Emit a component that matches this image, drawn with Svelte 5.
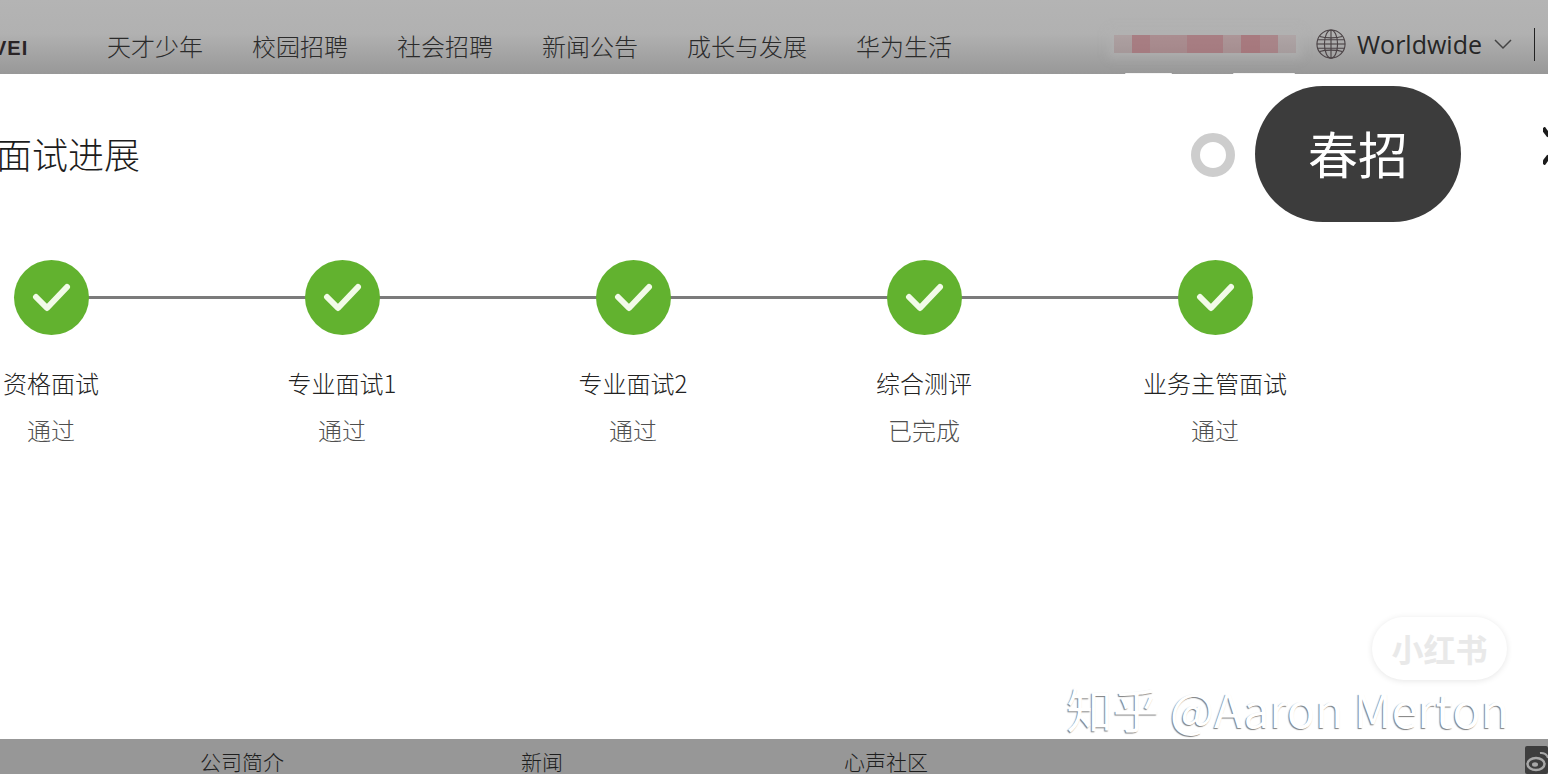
<script>
	const navItems = ['天才少年', '校园招聘', '社会招聘', '新闻公告', '成长与发展', '华为生活'];

	const steps = [
		{ name: '资格面试', status: '通过' },
		{ name: '专业面试1', status: '通过' },
		{ name: '专业面试2', status: '通过' },
		{ name: '综合测评', status: '已完成' },
		{ name: '业务主管面试', status: '通过' }
	];

	const footerLinks = ['公司简介', '新闻', '心声社区'];

	// mosaic over the user name in the header
	const mosaic = [0.2, 0.65, 0.45, 0.45, 0.65, 0.65, 0.35, 0.7, 0.55, 0.15];
</script>

<div class="page">
	<header class="topbar">
		<span class="logo">VEI</span>
		<nav class="nav">
			{#each navItems as item}
				<span>{item}</span>
			{/each}
		</nav>
		<div class="top-right">
			<div class="mosaic">
				{#each mosaic as a}
					<i style="opacity: {a}"></i>
				{/each}
			</div>
			<svg class="globe" width="30" height="30" viewBox="0 0 32 32" fill="none" stroke="#4a4245" stroke-width="1.2">
				<circle cx="16" cy="16" r="15" />
				<ellipse cx="16" cy="16" rx="7" ry="15" />
				<line x1="16" y1="1" x2="16" y2="31" />
				<line x1="1" y1="16" x2="31" y2="16" />
				<path d="M4 8c6 2 18 2 24 0M4 24c6-2 18-2 24 0M2 11.500h28M2 20.500h28" />
			</svg>
			<span class="region">Worldwide</span>
			<svg class="chevron" width="20" height="12" viewBox="0 0 20 12" fill="none" stroke="#444" stroke-width="1.5">
				<polyline points="2 2 10 10 18 2" />
			</svg>
			<span class="divider"></span>
		</div>
		<span class="scrap scrap-a"></span>
		<span class="scrap scrap-b"></span>
	</header>

	<main class="content">
		<div class="title-row">
			<h1>面试进展</h1>
			<div class="season">
				<span class="ring"></span>
				<span class="pill">春招</span>
			</div>
			<svg class="close" width="5" height="38" viewBox="0 0 5 38" fill="none" stroke="#1c1c1c" stroke-width="4.5">
				<line x1="0" y1="1" x2="6" y2="9" />
				<line x1="6" y1="29" x2="0" y2="37" />
			</svg>
		</div>

		<div class="steps">
			{#each steps as step, i}
				<div class="step">
					{#if i < steps.length - 1}
						<span class="line"></span>
					{/if}
					<span class="dot">
						<svg width="40" height="32" viewBox="0 0 40 32" fill="none" stroke="#f2fbe8" stroke-width="6" stroke-linecap="round" stroke-linejoin="round">
							<polyline points="5 15 16 26 36 5" />
						</svg>
					</span>
					<div class="step-name">{step.name}</div>
					<div class="step-status">{step.status}</div>
				</div>
			{/each}
		</div>

		<div class="wm-badge">小红书</div>
		<div class="wm-zhihu">知乎 @Aaron Merton</div>
	</main>

	<footer class="bottombar">
		{#each footerLinks as link}
			<span class="foot-link">{link}</span>
		{/each}
		<svg class="weibo" width="23" height="28" viewBox="0 0 23 28">
			<rect width="23" height="28" rx="2" fill="#3e3e3e" />
			<ellipse cx="11" cy="18" rx="8.500" ry="6" fill="none" stroke="#a8a8a8" stroke-width="2.500" />
			<ellipse cx="10" cy="18.500" rx="3" ry="2.200" fill="#a8a8a8" />
			<path d="M15 7a7 7 0 0 1 8 5" fill="none" stroke="#a8a8a8" stroke-width="2" />
		</svg>
	</footer>
</div>

<style>
	:global(body) {
		margin: 0;
		background: #fff;
	}

	.page {
		width: 1548px;
		height: 774px;
		display: flex;
		flex-direction: column;
		overflow: hidden;
		font-family: 'Noto Sans CJK SC', 'Liberation Sans', sans-serif;
		color: #222;
	}

	.topbar {
		height: 74px;
		flex: none;
		position: relative;
		display: flex;
		align-items: flex-start;
		background: linear-gradient(180deg, #b4b4b4 0%, #b1b1b1 45%, #989898 100%);
	}

	.logo {
		flex: none;
		width: 114px;
		margin-top: 36px;
		margin-left: -7px;
		font: bold 20px/24px 'Liberation Sans', sans-serif;
		letter-spacing: 1px;
		color: #2a2426;
		white-space: nowrap;
	}

	.nav {
		display: flex;
		gap: 49px;
		margin-top: 28px;
		font-size: 24px;
		line-height: 35px;
		font-weight: 300;
		color: #2b2b2b;
	}

	.top-right {
		margin-left: auto;
		display: flex;
		align-items: center;
		height: 32px;
		margin-top: 28px;
	}

	.mosaic {
		display: flex;
		width: 182px;
		height: 18px;
		margin-right: 20px;
		box-shadow: 0 0 8px 5px rgba(178, 178, 178, 0.6);
	}

	.mosaic i {
		flex: 1;
		background: #a5646b;
	}

	.globe {
		margin-right: 11px;
	}

	.region {
		font: 25px/32px 'Open Sans', sans-serif;
		color: #262626;
		margin-right: 11px;
	}

	.chevron {
		margin-right: 21px;
	}

	.divider {
		width: 1px;
		height: 33px;
		background: #222;
		margin-right: 13px;
	}

	.scrap {
		position: absolute;
		bottom: 0;
		height: 1px;
		background: #f4f4f4;
		border-radius: 1px 1px 0 0;
	}

	.scrap-a {
		left: 1125px;
		width: 47px;
	}

	.scrap-b {
		left: 1233px;
		width: 62px;
	}

	.content {
		flex: 1;
		position: relative;
		background: #fff;
	}

	.title-row {
		height: 136px;
		margin-top: 12px;
		display: flex;
		align-items: center;
	}

	h1 {
		margin: -3px 0 0 -4px;
		font-size: 36px;
		font-weight: 300;
		line-height: 50px;
		color: #1c1c1c;
	}

	.season {
		margin-left: auto;
		display: flex;
		align-items: center;
		gap: 20px;
	}

	.ring {
		width: 44px;
		height: 44px;
		margin-top: 2px;
		box-sizing: border-box;
		border: 9px solid #cdcdcd;
		border-radius: 50%;
	}

	.pill {
		width: 206px;
		height: 136px;
		border-radius: 68px;
		background: #3c3c3c;
		color: #fff;
		font-size: 50px;
		line-height: 132px;
		text-align: center;
	}

	.close {
		margin-left: 82px;
		margin-top: -16px;
		flex: none;
	}

	.steps {
		display: flex;
		margin-left: -94.5px;
		margin-top: 38px;
	}

	.step {
		width: 291px;
		flex: none;
		position: relative;
		display: flex;
		flex-direction: column;
		align-items: center;
	}

	.line {
		position: absolute;
		left: 50%;
		top: 35.5px;
		width: 291px;
		height: 3px;
		background: #7b7b7b;
	}

	.dot {
		position: relative;
		width: 75px;
		height: 75px;
		border-radius: 50%;
		background: #62b22f;
		display: flex;
		align-items: center;
		justify-content: center;
	}

	.step-name {
		margin-top: 30px;
		font-size: 24px;
		line-height: 35px;
		font-weight: 300;
		color: #222;
	}

	.step-status {
		margin-top: 12px;
		font-size: 24px;
		line-height: 35px;
		font-weight: 300;
		color: #4f4f4f;
	}

	.wm-badge {
		position: absolute;
		left: 1372px;
		top: 543px;
		width: 135px;
		height: 63px;
		border-radius: 32px;
		background: #fff;
		box-shadow: 0 1px 6px rgba(0, 0, 0, 0.1);
		font-size: 32px;
		font-weight: 700;
		line-height: 63px;
		text-align: center;
		color: #e9e9e9;
	}

	.wm-zhihu {
		position: absolute;
		right: 39px;
		top: 604px;
		font-size: 46.5px;
		line-height: 60px;
		font-weight: 400;
		white-space: nowrap;
		color: #fff;
		text-shadow: -1px 1px 1px #7f7f7f;
	}

	.bottombar {
		height: 35px;
		flex: none;
		position: relative;
		display: grid;
		grid-template-columns: 321px 323px auto;
		justify-content: start;
		background: #979797;
		font-size: 21px;
		line-height: 44px;
		font-weight: 300;
		color: #1e1e1e;
		padding-left: 200px;
	}

	.weibo {
		position: absolute;
		left: 1525px;
		top: 7px;
	}
</style>
